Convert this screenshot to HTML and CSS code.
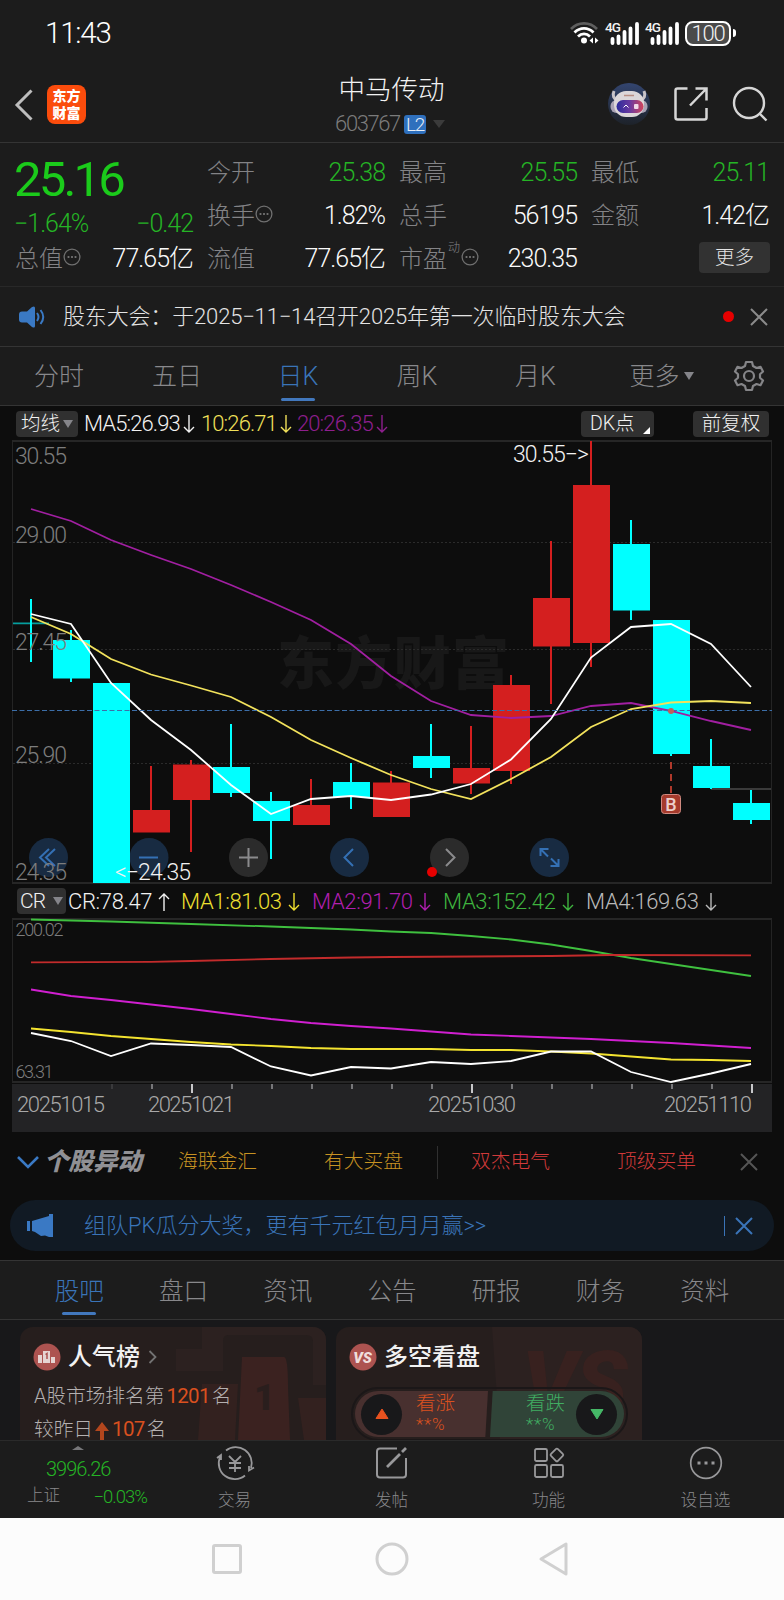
FILE: index.html
```
<!DOCTYPE html>
<html lang="zh-CN">
<head>
    <meta charset="UTF-8">
    <meta name="viewport" content="width=device-width, initial-scale=1.0">
    <title>中马传动 603767</title>
    <link rel="stylesheet" href="styles.css">
</head>
<body>
    <svg class="defs" width="0" height="0">
        <symbol id="down" viewBox="0 0 12 20"><path d="M6 1v17M1 13l5 5 5-5" fill="none" stroke="currentColor" stroke-width="1.4"/></symbol>
        <symbol id="up" viewBox="0 0 12 20"><path d="M6 19V2M1 7l5-5 5 5" fill="none" stroke="currentColor" stroke-width="1.4"/></symbol>
        <symbol id="info" viewBox="0 0 18 18"><circle cx="9" cy="9" r="7.9" fill="none" stroke="#707070" stroke-width="1.3"/><path d="M4.6 9h1.8M8.1 9h1.8M11.6 9h1.8" stroke="#707070" stroke-width="1.8"/></symbol>
        <symbol id="signal" viewBox="0 0 34 24"><path d="M6.5 18v4M12.5 15.500v6.500M18.500 11v11M24.500 7.500v14.500M31 3v19" stroke="#fff" stroke-width="3.8" stroke-linecap="round"/></symbol>
        <symbol id="close" viewBox="0 0 20 20"><path d="M2 2l16 16M18 2L2 18" stroke="currentColor" stroke-width="2" fill="none"/></symbol>
    </svg>

    <header class="header">
        <div class="statusbar">
            <span class="clock">11:43</span>
            <div class="status-icons">
                <svg class="wifi" width="31" height="26" viewBox="0 0 31 26" fill="none">
                    <path d="M2 9C9 1.500 21 1.500 28 9" stroke="#5f5f5f" stroke-width="2.600"/>
                    <path d="M5.500 12.500C11 7 19 7 24.500 12.500M9 16.500c3.500-3.500 8.500-3.500 12 0" stroke="#fff" stroke-width="2.800"/>
                    <circle cx="15" cy="20.500" r="3" fill="#fff"/>
                    <path d="M24 17.500v6l-3.500-3zM26 17.500v6l3.500-3z" fill="#fff"/>
                </svg>
                <span class="signal"><b>4G</b><svg width="34" height="24"><use href="#signal"/></svg></span>
                <span class="signal"><b>4G</b><svg width="34" height="24"><use href="#signal"/></svg></span>
                <span class="battery">100</span><i class="battery-tip"></i>
            </div>
        </div>
        <div class="titlebar">
            <div class="title-left">
                <svg width="20" height="34" viewBox="0 0 20 34"><path d="M17.500 2.500L3 17l14.500 14.500" fill="none" stroke="#bdbdbd" stroke-width="3"/></svg>
                <div class="logo">东方<br>财富</div>
            </div>
            <div class="title-mid">
                <h1>中马传动</h1>
                <div class="code">603767<span class="level">L2</span><i class="tri tri-dark"></i></div>
            </div>
            <div class="title-right">
                <svg width="42" height="42" viewBox="0 0 42 42">
                    <defs>
                        <linearGradient id="rb" x1="0" y1="0" x2="0" y2="1"><stop offset="0" stop-color="#33456f"/><stop offset="1" stop-color="#1d2229"/></linearGradient>
                        <linearGradient id="rf" x1="0" y1="0" x2="1" y2="0"><stop offset="0" stop-color="#2c2c9c"/><stop offset=".5" stop-color="#6a3aa0"/><stop offset="1" stop-color="#d2455c"/></linearGradient>
                    </defs>
                    <circle cx="21" cy="21" r="21" fill="url(#rb)"/>
                    <path d="M6 8c-2 5 0 8 3 9M36 8c2 5 0 8-3 9" stroke="#c9c4c8" stroke-width="3" fill="none"/>
                    <rect x="2.500" y="17" width="37" height="13" rx="6" fill="#a9a3b5"/>
                    <rect x="6" y="8" width="30" height="26" rx="12" fill="#dcd7d9"/>
                    <path d="M16 12.500h10" stroke="#b98f84" stroke-width="1.500"/>
                    <rect x="8.500" y="17" width="27" height="13" rx="6.500" fill="url(#rf)"/>
                    <path d="M15.500 24.500l2.500-2.500 2.500 2.500" stroke="#fff" fill="none"/>
                    <rect x="26" y="21" width="4.500" height="5" rx="1" fill="#f0d9e8"/>
                </svg>
                <svg width="36" height="36" viewBox="0 0 36 36" fill="none" stroke="#d6d6d6" stroke-width="2.500"><path d="M14.500 2.500H4.500q-2 0-2 2v27q0 2 2 2h27q2 0 2-2V22M22.500 2.500h11v12M33.500 2.500L17 19.500"/></svg>
                <svg width="36" height="36" viewBox="0 0 36 36" fill="none" stroke="#d6d6d6" stroke-width="2.400"><circle cx="17" cy="17" r="15"/><path d="M27.500 27.500l7 7"/></svg>
            </div>
        </div>
    </header>

    <section class="quote">
        <div class="quote-col">
            <div class="price">25.16</div>
            <div class="cell change green"><span>−1.64%</span><span>−0.42</span></div>
            <div class="cell"><label>总值<svg width="18" height="18"><use href="#info"/></svg></label><span>77.65亿</span></div>
        </div>
        <div class="quote-col">
            <div class="cell"><label>今开</label><span class="green">25.38</span></div>
            <div class="cell"><label>换手<svg width="18" height="18"><use href="#info"/></svg></label><span>1.82%</span></div>
            <div class="cell"><label>流值</label><span>77.65亿</span></div>
        </div>
        <div class="quote-col">
            <div class="cell"><label>最高</label><span class="green">25.55</span></div>
            <div class="cell"><label>总手</label><span>56195</span></div>
            <div class="cell"><label>市盈<sup>动</sup><svg width="18" height="18"><use href="#info"/></svg></label><span>230.35</span></div>
        </div>
        <div class="quote-col">
            <div class="cell"><label>最低</label><span class="green">25.11</span></div>
            <div class="cell"><label>金额</label><span>1.42亿</span></div>
            <div class="cell cell-end"><button class="more">更多</button></div>
        </div>
    </section>

    <section class="news">
        <svg width="26" height="22" viewBox="0 0 26 22"><path d="M3 5.500h5L13 1q3-1.500 3 1v18q0 2.500-3 1l-5-4.500H3q-3 0-3-3v-5q0-3 3-3z" fill="#3a79c4"/><path d="M18 7q3 4 0 8M21.500 4q5.500 7 0 14" stroke="#3a79c4" stroke-width="2" fill="none"/></svg>
        <p>股东大会：于2025−11−14召开2025年第一次临时股东大会</p>
        <i class="dot"></i>
        <svg class="close" width="20" height="20"><use href="#close"/></svg>
    </section>

    <nav class="periods">
        <a>分时</a>
        <a>五日</a>
        <a class="active">日K</a>
        <a>周K</a>
        <a>月K</a>
        <a>更多<i class="tri tri-sm"></i></a>
        <a class="gear"><svg width="30" height="32" viewBox="0 0 30 32" fill="none" stroke="#858588" stroke-width="2.200" stroke-linejoin="round"><path d="M12 2h6l1 4 3.500 2 4-1.200 2.500 4.700-3 2.700v3.600l3 2.700-2.500 4.700-4-1.200-3.500 2-1 4h-6l-1-4-3.500-2-4 1.200L1 20.500l3-2.700v-3.600l-3-2.700 2.500-4.700 4 1.200L11 6z"/><circle cx="15" cy="16" r="5"/></svg></a>
    </nav>

    <main class="charts">
        <div class="legend legend-ma">
            <span class="chip chip-ma">均线<i class="tri tri-sm"></i></span>
            <span class="l-ma5">MA5:26.93<svg width="12" height="20"><use href="#down"/></svg></span>
            <span class="l-ma10 yellow">10:26.71<svg width="12" height="20"><use href="#down"/></svg></span>
            <span class="l-ma20 purple">20:26.35<svg width="12" height="20"><use href="#down"/></svg></span>
            <span class="chip chip-dk">DK点<i class="corner"></i></span>
            <span class="chip chip-fq">前复权</span>
        </div>

        <svg class="kline" width="784" height="444" viewBox="0 440 784 444">
            <text class="watermark" x="277" y="684" textLength="232">东方财富</text>
            <g stroke="#2b2b2b" stroke-dasharray="2 2" fill="none">
                <path d="M13 542.500h758M13 649.500h758M13 763.500h758"/>
            </g>
            <path d="M12.500 441v443M771.500 441v443" stroke="#242424"/>
            <path d="M12 441h760M12 883h760" stroke="#262626" stroke-width="2"/>
            <path d="M711 789h60" stroke="#3a3a3a" stroke-width="2"/>

            <!-- rising candles -->
            <g fill="#d41f1f" stroke="none">
                <path d="M133 810h37v22.500h-37zM173 764.500h37v35.500h-37zM293 805h37v20h-37zM373 782.500h37v34.500h-37zM453 768h37v15.500h-37zM493 685h37v86h-37zM533 598h37v48.500h-37zM573 485h37v158h-37z"/>
                <path d="M150 766h2v50h-2zM190 760h2v92h-2zM310 779h2v30h-2zM390 771h2v30h-2zM470 726h2v68h-2zM510 675h2v109h-2zM550 541h2v163h-2zM590 441h2v226h-2z"/>
            </g>
            <!-- falling candles -->
            <g fill="#00ffff">
                <path d="M53 640h37v38.500h-37zM93 683h37v200h-37zM213 767h37v26h-37zM253 801h37v20h-37zM333 782h37v15h-37zM413 756h37v12h-37zM613 544h37v66.500h-37zM653 620h37v134h-37zM693 766h37v22h-37zM733 803h37v17h-37z"/>
                <path d="M30 599h2v63h-2zM70 630h2v52h-2zM230 724h2v73h-2zM270 792h2v67h-2zM350 763h2v46h-2zM430 724h2v54h-2zM630 520h2v100h-2zM670 650h2v106h-2zM710 739h2v50h-2zM750 790h2v34h-2z"/>
                <path d="M13 622.500h36v1.800h-36z" opacity=".6"/>
            </g>

            <g class="axis">
                <text x="15" y="464" textLength="52">30.55</text>
                <text x="15" y="543" textLength="52">29.00</text>
                <text x="15" y="650" textLength="52">27.45</text>
                <text x="15" y="763" textLength="52">25.90</text>
            </g>

            <g fill="none" stroke-width="1.800">
                <path stroke="#a11fa1" d="M31 509L71 521 111 540 151 555 191 569 231 585 271 602 311 620 351 644 391 676 431 701 471 715 511 718 551 716 591 706 631 703 671 711 711 721 751 730"/>
                <path stroke="#f2e25c" d="M31 617L71 634 111 659 151 674.500 191 685.500 231 697 271 717 311 740 351 758 391 775 431 789 471 799 511 779 551 757 591 727 631 709 671 702.500 711 701 751 703"/>
                <path stroke="#fff" d="M31 614L71 624 111 683 151 720 191 750 231 785 271 814 311 799 351 796 391 800 431 794.500 471 784 511 759.500 551 719 591 657.500 631 627 671 624 711 644 751 687"/>
            </g>
            <path d="M12 710.500h760" stroke="#3c6ea8" stroke-width="1.200" stroke-dasharray="5 2.500"/>

            <!-- buy mark -->
            <circle cx="671" cy="711" r="3" fill="#c0605a"/>
            <path d="M671 762v32" stroke="#b0392b" stroke-width="2" stroke-dasharray="7 5"/>
            <rect x="661.500" y="794.500" width="19" height="19" rx="3" fill="#a53a2c" stroke="#d08a80"/>
            <text class="buy" x="671" y="810.500">B</text>

            <!-- chart controls -->
            <g fill="#182b42">
                <circle cx="48.500" cy="857.500" r="19.500"/>
                <circle cx="149" cy="857.500" r="19.500"/>
                <circle cx="349.500" cy="857.500" r="19.500"/>
                <circle cx="549.500" cy="857.500" r="19.500"/>
                <g fill="#2b2b2b"><circle cx="248.500" cy="857.500" r="19.500"/><circle cx="449.500" cy="857.500" r="19.500"/></g>
            </g>
            <path d="M93 835h37v48h-37z" fill="#0ff"/>
            <g fill="none" stroke="#3470b4" stroke-width="2">
                <path d="M49 849l-9 8.500 9 8.500M55 849l-9 8.500 9 8.500"/>
                <path d="M139 857.500h19M353 849l-8.500 8.500 8.500 8.500"/>
                <path d="M540.500 856v-7h8M541 849.500l7 7M558.500 859v7h-8M558 865.500l-7-7"/>
                <g stroke="#8b8b8d"><path d="M239 857.500h19M248.500 848v19M446 849l8.500 8.500-8.500 8.500"/></g>
            </g>
            <circle cx="432" cy="872" r="5" fill="#e60000"/>
            <text class="axis" x="15" y="880" textLength="52">24.35</text>
            <text class="mark" x="513" y="462" textLength="76">30.55−&gt;</text>
            <text class="mark" x="115" y="880" textLength="76">&lt;−24.35</text>
        </svg>

        <div class="legend legend-cr">
            <span class="chip chip-cr">CR<i class="tri tri-sm"></i></span>
            <span class="l-cr">CR:78.47<svg width="12" height="20"><use href="#up"/></svg></span>
            <span class="l-m1 yellow-deep">MA1:81.03<svg width="12" height="20"><use href="#down"/></svg></span>
            <span class="l-m2 magenta">MA2:91.70<svg width="12" height="20"><use href="#down"/></svg></span>
            <span class="l-m3 green-line">MA3:152.42<svg width="12" height="20"><use href="#down"/></svg></span>
            <span class="l-m4 silver">MA4:169.63<svg width="12" height="20"><use href="#down"/></svg></span>
        </div>

        <svg class="cr" width="784" height="214" viewBox="0 918 784 214">
            <path d="M12 919h760M12 1082h760" stroke="#262626" stroke-width="2"/>
            <path d="M12.500 919v163M771.500 919v163" stroke="#242424"/>
            <text class="axis axis-sm" x="15.500" y="936" textLength="48">200.02</text>
            <text class="axis axis-sm" x="15.500" y="1078" textLength="38">63.31</text>
            <g fill="none" stroke-width="1.800">
                <path stroke="#3fc03f" d="M31 919.500L111 921.500 191 924 271 926.500 351 929.500 391 931.500 431 933 471 936 511 939.500 551 944.500 591 951 631 958 671 964 711 970 751 976"/>
                <path stroke="#c22b2b" d="M31 962.300L151 961.800 191 961 271 959 351 957.500 391 957 471 956.500 551 956 611 955 751 955.300"/>
                <path stroke="#d01fd0" d="M31 989.500L71 996 111 1000 151 1004.500 191 1009 231 1014 271 1019 311 1023 351 1026 391 1028.500 431 1031.500 471 1034.500 511 1036 551 1037.500 591 1039 631 1041 671 1043 711 1045.500 751 1048"/>
                <path stroke="#f4e430" d="M31 1028.500L71 1032 111 1036 151 1039 191 1042 231 1044.500 271 1046 311 1048 351 1049 431 1049 471 1050 511 1050 551 1051.500 591 1053.500 631 1056.500 671 1059.500 711 1060 751 1061"/>
                <path stroke="#fff" d="M31 1033L71 1041 111 1056 151 1043.500 191 1045 231 1047 271 1066.500 311 1075.500 351 1067 391 1068.500 431 1062 471 1064 511 1061 551 1051.500 591 1051.500 631 1072 671 1082 711 1073.500 751 1064"/>
            </g>
            <rect x="12" y="1084" width="760" height="48" fill="#232325"/>
            <path d="M152 1084v5M232 1084v5M272 1084v5M312 1084v5M352 1084v5M392 1084v5M432 1084v5M512 1084v5M552 1084v5M592 1084v5M632 1084v5M672 1084v5M712 1084v5" stroke="#77777a" stroke-width="2"/>
            <path d="M112 1084v5" stroke="#3a3a3c" stroke-width="2"/>
            <path d="M192 1084v9M472 1084v9M752 1084v9" stroke="#c8c8ca" stroke-width="2"/>
            <g class="dates">
                <text x="17" y="1112" textLength="88">20251015</text>
                <text x="148" y="1112" textLength="87">20251021</text>
                <text x="428" y="1112" textLength="88">20251030</text>
                <text x="664" y="1112" textLength="88">20251110</text>
            </g>
        </svg>

        <div class="movers">
            <svg width="22" height="14" viewBox="0 0 22 14"><path d="M1 2l10 10L21 2" fill="none" stroke="#3a79c4" stroke-width="2.600"/></svg>
            <strong>个股异动</strong>
            <span class="gold">海联金汇</span>
            <span class="gold">有大买盘</span>
            <i class="divider"></i>
            <span class="red">双杰电气</span>
            <span class="red">顶级买单</span>
            <svg class="close" width="20" height="20"><use href="#close"/></svg>
        </div>

        <div class="promo">
            <svg width="27" height="23" viewBox="0 0 27 23"><path d="M0 7h3v10H0zM5 7l17-5V0h4v23h-4l-4-1.500-4 .5-3-2-3-2-3-1z" fill="#3a79c4"/></svg>
            <p>组队PK瓜分大奖，更有千元红包月月赢&gt;&gt;</p>
            <i></i>
            <svg class="close" width="20" height="20"><use href="#close"/></svg>
        </div>
    </main>

    <nav class="tabs">
        <a class="active">股吧</a>
        <a>盘口</a>
        <a>资讯</a>
        <a>公告</a>
        <a>研报</a>
        <a>财务</a>
        <a>资料</a>
    </nav>

    <section class="cards">
        <article class="card">
            <svg class="card-bg" width="150" height="113" viewBox="0 0 150 113"><path d="M26 0h124v58h-13V14Q137 8 130 8H52q-5 0-5 6v30H0V22h26z" fill="#2c2120"/><path d="M66 30h42q4 0 4 30l2 53H62z" fill="#3b2220"/><path d="M26 57h36l-3 56H22zM122 71h28v42h-22z" fill="#33211f"/><text x="78" y="83">1</text></svg>
            <h2>
                <svg width="28" height="28" viewBox="0 0 28 28"><circle cx="14" cy="14" r="13.500" fill="#ad5350"/><path d="M5 12h4v8H5zM10 8h7v12h-7zM18 14h4v6h-4z" fill="#e6d4d2"/><path d="M12.500 11.500l1.500-1V16" stroke="#ad5350" stroke-width="1.500" fill="none"/></svg>
                人气榜
                <svg class="arrow" width="9" height="14" viewBox="0 0 9 14"><path d="M1.500 1l6 6-6 6" fill="none" stroke="#727272" stroke-width="1.800"/></svg>
            </h2>
            <p>A股市场排名第<b>1201</b>名</p>
            <p>较昨日<svg width="16" height="20" viewBox="0 0 16 20"><path d="M8 1l7 9h-5v10H6V10H1z" fill="#b3461d"/></svg><b>107</b> 名</p>
        </article>
        <article class="card card-vs">
            <svg class="card-bg" width="150" height="113" viewBox="0 0 150 113"><path d="M0 0h150v113H8z" fill="#2c2120"/><text class="big-vs" x="30" y="86">VS</text></svg>
            <h2>
                <svg width="28" height="28" viewBox="0 0 28 28"><circle cx="14" cy="14" r="13.500" fill="#ad5350"/><text class="vs" x="13.500" y="19.500">VS</text></svg>
                多空看盘
            </h2>
            <div class="vote">
                <div class="vote-up"><i class="knob"><svg width="14" height="12" viewBox="0 0 14 12"><path d="M7 1l6 9.500H1z" fill="#e8521f" stroke="#e8521f" stroke-linejoin="round"/></svg></i><span>看涨<small>**%</small></span></div>
                <div class="vote-down"><span>看跌<small>**%</small></span><i class="knob"><svg width="14" height="12" viewBox="0 0 14 12"><path d="M7 11L1 1.500h12z" fill="#45b867" stroke="#45b867" stroke-linejoin="round"/></svg></i></div>
            </div>
        </article>
    </section>

    <footer class="bottombar">
        <div class="index">
            <i class="tri-up"></i>
            <div class="index-value">3996.26</div>
            <div class="index-row"><span>上证</span><em>−0.03%</em></div>
        </div>
        <a>
            <svg width="40" height="34" viewBox="0 0 40 34" fill="none" stroke="#98989a" stroke-width="1.800"><path d="M11 4.500A16 16 0 0 1 36 22M30 29.500A16 16 0 0 1 5 11M2 12l4-3v5M34 20v4.500l5-3M14 10l6 6 6-6M14 17h12M14 22h12M20 16v10"/></svg>
            交易
        </a>
        <a>
            <svg width="34" height="34" viewBox="0 0 34 34" fill="none" stroke="#98989a" stroke-width="2"><path d="M22 2.500H5q-3 0-3 3v23q0 3 3 3h23q3 0 3-3V12"/><path d="M12 21L25 8M27 6l4-4" stroke-width="2.800"/></svg>
            发帖
        </a>
        <a>
            <svg width="34" height="34" viewBox="0 0 34 34" fill="none" stroke="#98989a" stroke-width="1.800"><rect x="3" y="3" width="12" height="12" rx="1.500"/><rect x="3" y="19" width="12" height="12" rx="1.500"/><rect x="19" y="19" width="12" height="12" rx="1.500"/><rect x="20" y="4" width="9.800" height="9.800" rx="1.500" transform="rotate(45 24.900 8.900)"/></svg>
            功能
        </a>
        <a>
            <svg width="34" height="34" viewBox="0 0 34 34" fill="none" stroke="#98989a" stroke-width="1.700"><circle cx="17" cy="17" r="15.300"/><path d="M8.500 17h3M15.500 17h3M22.500 17h3" stroke-width="3"/></svg>
            设自选
        </a>
    </footer>

    <div class="sysnav">
        <svg width="32" height="34" viewBox="0 0 32 34"><rect x="2.500" y="3.500" width="27" height="27" rx="1.500"/></svg>
        <svg width="34" height="34" viewBox="0 0 34 34"><circle cx="17" cy="17" r="15"/></svg>
        <svg width="32" height="36" viewBox="0 0 32 36"><path d="M27 3v30L2 18z"/></svg>
    </div>
</body>
</html>
```
FILE: styles.css
```
* {
    box-sizing: border-box;
}
body {
    margin: 0;
    width: 784px;
    height: 1600px;
    overflow: hidden;
    background: #1c1c1c;
    color: #f2f2f2;
    font-family: Roboto, "Noto Sans CJK SC", sans-serif;
    font-weight: 300;
    font-size: 24px;
    line-height: 1;
    white-space: nowrap;
}
h1, h2, p {
    margin: 0;
    font-weight: inherit;
}
svg {
    display: block;
    flex: none;
    overflow: visible;
}
i, em {
    font-style: normal;
}
.defs {
    position: absolute;
}
.green { color: #25b425; }
.yellow { color: #f0e05a; }
.yellow-deep { color: #f0e030; }
.purple { color: #8e1f8e; }
.magenta { color: #b01fb0; }
.green-line { color: #3fb43f; }
.silver { color: #b9b9b9; }

.tri {
    display: inline-block;
    border: 6px solid transparent;
    border-top: 8px solid #3b3b3b;
    border-bottom: 0;
}
.tri-sm {
    border-width: 5px;
    border-top: 8px solid #85858a;
    border-bottom: 0;
}

/* header */
.header {
    height: 143px;
    border-bottom: 1px solid #343434;
}
.statusbar {
    height: 67px;
    padding: 0 48px 0 45px;
    display: flex;
    justify-content: space-between;
    align-items: center;
}
.clock {
    padding-top: 1px;
    font-size: 29.500px;
    letter-spacing: -1.2px;
    color: #fff;
}
.status-icons {
    display: flex;
    align-items: center;
    margin-top: -1px;
}
.wifi {
    margin-right: 5px;
}
.signal {
    display: flex;
    position: relative;
    width: 40px;
    padding-left: 1px;
}
.signal b {
    position: absolute;
    left: 0;
    top: 0;
    font-size: 13.500px;
    font-weight: 500;
    letter-spacing: -.8px;
}
.battery {
    width: 46px;
    height: 25px;
    border: 2px solid #fff;
    border-radius: 8px;
    background: #4a4a4a;
    font-size: 22px;
    line-height: 22px;
    letter-spacing: -1.2px;
    text-align: center;
}
.battery-tip {
    width: 3px;
    height: 8px;
    margin-left: 2px;
    border-radius: 0 3px 3px 0;
    background: #fff;
}
.titlebar {
    height: 75px;
    padding: 0 16px 0 14px;
    display: grid;
    grid-template-columns: 200px 1fr 200px;
}
.title-left {
    display: flex;
    align-items: center;
    gap: 13px;
}
.logo {
    width: 39px;
    height: 39px;
    padding-top: 3px;
    border-radius: 8px;
    background: #fb4c0c;
    color: #fff;
    font-size: 14px;
    font-weight: 900;
    line-height: 16.500px;
    text-align: center;
}
.title-mid {
    text-align: center;
}
.title-mid h1 {
    margin: 9px 0 0 1px;
    font-size: 26.500px;
    line-height: 28px;
}
.code {
    margin: 9px 0 0 -2px;
    display: flex;
    justify-content: center;
    align-items: center;
    color: #7b7b7b;
    font-size: 22px;
    letter-spacing: -1.4px;
}
.level {
    width: 22px;
    height: 19px;
    margin: 0 7px 0 4px;
    border-radius: 3px;
    background: #2f70bd;
    color: #e8eef6;
    font-size: 19px;
    line-height: 20px;
    text-align: center;
}
.title-right {
    display: flex;
    align-items: center;
    justify-content: flex-end;
    gap: 23px;
    margin-top: -2px;
}

/* quote */
.quote {
    height: 144px;
    padding: 8px 15px 0;
    border-bottom: 1px solid #282828;
    display: grid;
    grid-template-columns: repeat(4, 178px);
    justify-content: space-between;
}
.cell {
    height: 43px;
    display: flex;
    justify-content: space-between;
    align-items: center;
    color: #fafafa;
    font-size: 25px;
    letter-spacing: -1px;
}
.cell.green, .cell .green {
    color: #25b425;
}
.cell label {
    display: flex;
    align-items: center;
    color: #838386;
    font-size: 24px;
    letter-spacing: 0;
}
.cell label svg {
    margin-top: -3px;
}
.cell sup {
    align-self: flex-start;
    margin: -5px 1px 0 1px;
    font-size: 12px;
    line-height: 1;
}
.cell-end {
    justify-content: flex-end;
}
.price {
    height: 50px;
    margin-left: -1px;
    color: #1bcb1b;
    font-size: 49px;
    font-weight: 400;
    letter-spacing: -2.800px;
    line-height: 57px;
}
.change {
    height: 36px;
    margin-left: -1px;
    padding-top: 8px;
}
.more {
    width: 71px;
    height: 31px;
    margin: -2px -1px 0 0;
    padding: 0;
    border: 0;
    border-radius: 4px;
    background: #323232;
    color: #e6e6e6;
    font: inherit;
    font-size: 19.500px;
    line-height: 31px;
}

/* news */
.news {
    height: 60px;
    padding: 0 15px 0 19px;
    border-bottom: 1px solid #343434;
    display: flex;
    align-items: center;
}
.news p {
    flex: 1;
    margin-left: 18px;
    font-size: 22px;
    letter-spacing: -.16px;
    color: #e4e4e4;
}
.dot {
    width: 11px;
    height: 11px;
    margin-right: 15px;
    border-radius: 50%;
    background: #e60000;
}
.close {
    color: #8b8b8b;
}

/* period tabs */
.periods {
    height: 59px;
    border-bottom: 1px solid #343434;
    display: grid;
    grid-template-columns: 118px 118px 124px 114px 123px 129px 46px;
    color: #88888b;
    font-size: 25px;
}
.periods a {
    display: flex;
    justify-content: center;
    align-items: center;
}
.periods .tri {
    margin-left: 4px;
}
.active {
    position: relative;
    color: #3a74b8;
}
.active::after {
    content: "";
    position: absolute;
    bottom: 4px;
    left: calc(50% - 17px);
    width: 34px;
    height: 3px;
    border-radius: 2px;
    background: #4278bd;
}

/* charts */
.charts {
    height: 854px;
    background: #0d0d0d;
}
.legend {
    display: flex;
    align-items: center;
    font-size: 22px;
    letter-spacing: -.9px;
    color: #f2f2f2;
}
.legend > span {
    display: flex;
    align-items: center;
    flex: none;
}
.legend svg {
    margin-left: 3px;
}
.legend-ma {
    height: 34px;
    padding: 2px 0 0 16px;
}
.legend-cr {
    height: 34px;
    padding: 1px 0 0 17px;
    letter-spacing: -.35px;
}
.legend-cr svg {
    margin-left: 6px;
}
.legend .chip {
    height: 26px;
    margin-top: -1px;
    border-radius: 4px;
    background: #303030;
    justify-content: center;
    letter-spacing: 0;
    font-size: 19.500px;
}
.chip .tri {
    margin-left: 3px;
}
.legend .chip-ma { width: 62px; margin-right: 6px; }
.l-ma5 { width: 117px; }
.l-ma10 { width: 96px; }
.l-ma20 { width: 284px; }
.legend .chip-dk { width: 73px; position: relative; justify-content: flex-start; padding-left: 9px; }
.legend .chip-fq { width: 76px; margin-left: 39px; }
.corner {
    position: absolute;
    right: 4px;
    bottom: 3px;
    border-left: 7px solid transparent;
    border-bottom: 7px solid #fff;
}
.legend .chip-cr { width: 49px; margin-right: 2px; font-size: 21px; letter-spacing: -1px; }
.chip-cr .tri { margin-left: 8px; }
.l-cr { width: 113px; }
.l-m1 { width: 131px; }
.l-m2 { width: 131px; }
.l-m3 { width: 143px; }
.axis {
    fill: #7d7d7d;
    font-size: 23px;
}
.axis-sm {
    font-size: 18px;
}
.mark {
    fill: #f2f2f2;
    font-size: 23px;
}
.dates {
    fill: #a8a8a8;
    font-size: 22px;
}
.watermark {
    fill: #181818;
    font-family: "Noto Sans CJK SC", sans-serif;
    font-size: 57px;
    font-weight: 900;
}
.buy {
    fill: #ecd0cc;
    font-size: 18px;
    font-weight: 500;
    text-anchor: middle;
}
.movers {
    height: 60px;
    padding: 0 25px 0 17px;
    display: flex;
    align-items: center;
    font-size: 19.800px;
}
.movers strong {
    width: 134px;
    margin-left: 5px;
    color: #909094;
    font-size: 24.500px;
    font-weight: 900;
    font-style: italic;
}
.movers span {
    width: 146px;
}
.movers .gold + .gold {
    width: 113px;
}
.movers .divider {
    width: 1px;
    height: 33px;
    margin-right: 33px;
    background: #303030;
}
.movers .red + .red {
    flex: 1;
}
.gold { color: #c79222; }
.red { color: #d03a3a; }
.movers .close {
    color: #555;
}
.promo {
    height: 51px;
    margin: 8px 10px 0;
    padding: 0 20px 0 17px;
    border-radius: 26px;
    background: #111a24;
    display: flex;
    align-items: center;
    color: #3a74b8;
}
.promo p {
    flex: 1;
    margin-left: 30px;
    font-size: 22px;
}
.promo i {
    width: 1px;
    height: 20px;
    margin-right: 9px;
    background: #3a74b8;
}
.promo .close {
    color: #3a74b8;
}

/* content tabs */
.tabs {
    height: 60px;
    padding: 0 27px;
    border-top: 1px solid #343434;
    border-bottom: 1px solid #343434;
    display: flex;
    color: #88888b;
    font-size: 24.500px;
}
.tabs a {
    flex: 1;
    padding-top: 4px;
    display: flex;
    justify-content: center;
    align-items: center;
}

/* cards */
.cards {
    height: 120px;
    padding: 7px 20px 0;
    overflow: hidden;
    background: #18181a;
    display: flex;
    gap: 10px;
}
.card {
    position: relative;
    width: 306px;
    height: 140px;
    padding: 16px 13px;
    border-radius: 13px;
    overflow: hidden;
    background: #261e1d;
}
.card-bg {
    position: absolute;
    right: 0;
    top: 0;
}
.card-bg text {
    fill: #2a1e1d;
    font-size: 36px;
    font-weight: 900;
}
.card-bg .big-vs {
    fill: #38211f;
    font-size: 86px;
    font-style: italic;
    letter-spacing: -2px;
}
.card h2 {
    position: relative;
    height: 28px;
    display: flex;
    align-items: center;
    gap: 7px;
    font-size: 24px;
    font-weight: 500;
}
.card .arrow {
    margin-left: 1px;
}
.vs {
    fill: #f0dedc;
    font-size: 15px;
    font-weight: 900;
    font-style: italic;
    text-anchor: middle;
}
.card p {
    position: relative;
    height: 33px;
    margin-left: 1px;
    display: flex;
    align-items: center;
    font-size: 19.700px;
    color: #b4b0b0;
}
.card h2 + p {
    margin-top: 9px;
}
.card b {
    margin: 0 2px;
    color: #d9501f;
    font-size: 20.500px;
    font-weight: 400;
    letter-spacing: -.7px;
}
.card p svg {
    margin: 3px 0 0 1px;
}
.vote {
    position: relative;
    height: 54px;
    margin: 16px 0 0 2px;
    width: 277px;
    padding: 2px;
    border: 2px solid #1b1718;
    border-radius: 27px;
    display: flex;
    gap: 2px;
    font-size: 19.500px;
    line-height: 21px;
}
.vote > div {
    flex: 1;
    display: flex;
    align-items: center;
}
.vote-up {
    border-radius: 25px 0 0 25px;
    background: #48302f;
    color: #d9501f;
    gap: 14px;
    padding-left: 6px;
    clip-path: polygon(0 0, 100% 0, 98% 100%, 0 100%);
}
.vote-down {
    border-radius: 0 25px 25px 0;
    background: #304438;
    color: #41ad62;
    gap: 11px;
    padding-right: 7px;
    justify-content: flex-end;
    clip-path: polygon(2% 0, 100% 0, 100% 100%, 0 100%);
}
.vote small {
    display: block;
    font-size: 17px;
    letter-spacing: .8px;
}
.knob {
    width: 41px;
    height: 41px;
    border-radius: 50%;
    background: #18181a;
    display: flex;
    justify-content: center;
    align-items: center;
}

/* bottom bar */
.bottombar {
    height: 78px;
    border-top: 1px solid #2a2a2a;
    display: grid;
    grid-template-columns: 156px repeat(4, 157px);
    color: #88888b;
    font-size: 16.600px;
}
.bottombar a {
    display: flex;
    flex-direction: column;
    align-items: center;
    gap: 13px;
    padding-top: 5px;
}
.index {
    padding: 5px 9px 0 27px;
}
.tri-up {
    display: block;
    width: 0;
    margin-left: 45px;
    border: 6px solid transparent;
    border-top: 0;
    border-bottom: 4px solid #77777a;
}
.index-value {
    margin: 9px 0 0 19px;
    color: #25b425;
    font-size: 20px;
    letter-spacing: -1px;
}
.index-row {
    margin-top: 9px;
    display: flex;
    justify-content: space-between;
}
.index-row em {
    color: #25b425;
    font-size: 18.500px;
    letter-spacing: -1px;
}

/* system navigation */
.sysnav {
    height: 82px;
    padding-right: 2px;
    background: #fcfcfc;
    display: flex;
    justify-content: center;
    align-items: center;
    gap: 132px;
}
.sysnav svg {
    fill: none;
    stroke: #d0d0d0;
    stroke-width: 3;
    stroke-linejoin: round;
}
.sysnav svg:last-child {
    margin-left: -2px;
}
```
